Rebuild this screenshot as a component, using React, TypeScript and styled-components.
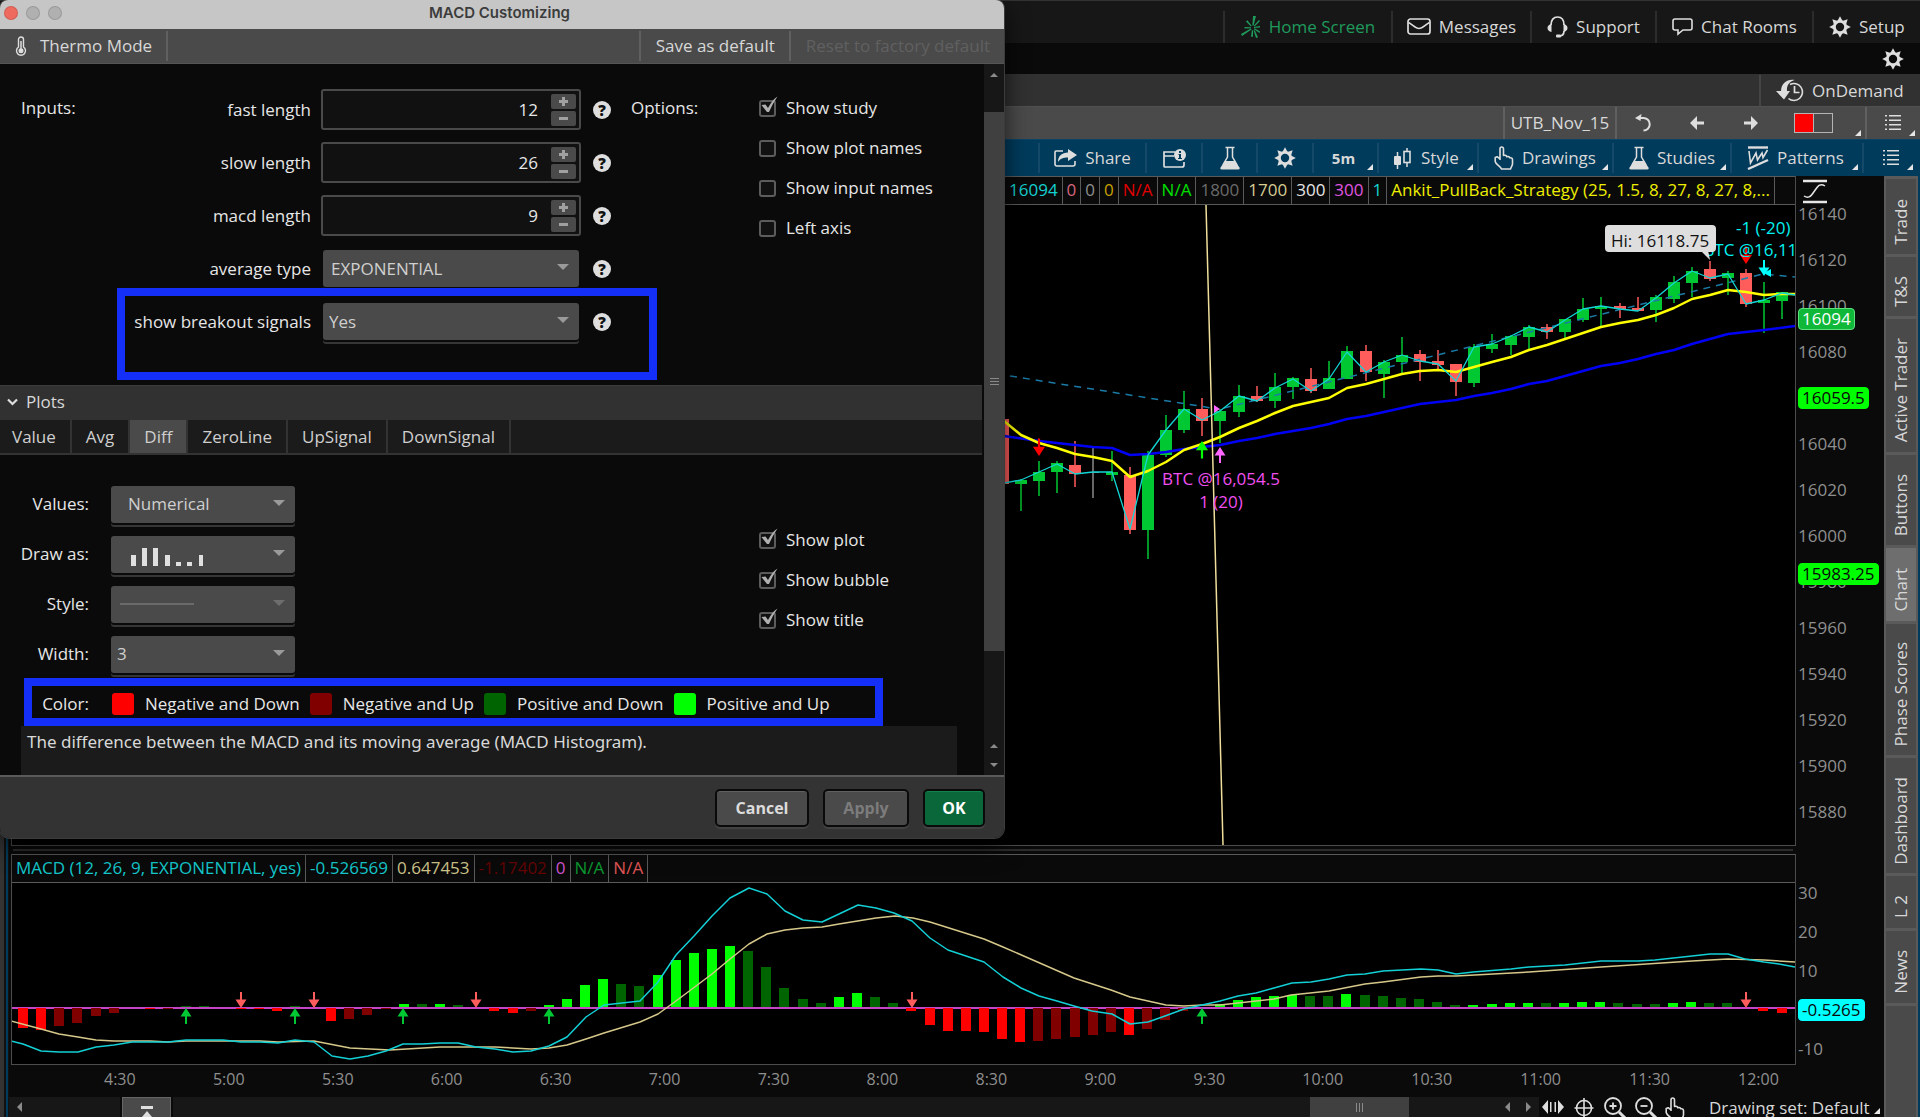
import React, { useState } from "react";
import styled, { createGlobalStyle, css } from "styled-components";

const sans = `"Open Sans", "Noto Sans", sans-serif`;

const c = {
  ink: "#0a0a0a",
  track: "#171717",
  panel: "#1b1b1b",
  bar: "#313131",
  grey: "#4a4a4a",
  line: "#5a5a5a",
  text: "#d8d8d8",
  navy: "#003b5c",
  mark: "#1430f8",
};

const Global = createGlobalStyle`
  *, *::before, *::after { box-sizing: border-box; }
  body { margin: 0; background: #000; }
  button, input, select { font: inherit; color: inherit; margin: 0; }
`;

/* ---------- application frame ---------- */

const App_ = styled.div`
  position: relative;
  display: flex;
  flex-direction: column;
  height: 100vh;
  min-height: 900px;
  overflow: hidden;
  background: ${c.ink};
  color: ${c.text};
  font: 17px/24px ${sans};
`;

const Bar = styled.div<{ $h: number; $bg: string; $line?: string }>`
  display: flex;
  flex: none;
  justify-content: flex-end;
  height: ${(p) => p.$h}px;
  padding-right: 1px;
  background: ${(p) => p.$bg};
  border-top: 1px solid ${(p) => p.$line ?? p.$bg};
`;

const MenuBar = styled(Bar)`
  padding-top: 10px;
`;

const ChartBar = styled(Bar)`
  padding: 3px 3px 3px 0;
`;

const Cell = styled.button<{ $w: number; $line: string; $green?: boolean; $start?: boolean }>`
  position: relative;
  display: flex;
  align-items: center;
  justify-content: ${(p) => (p.$start ? "flex-start" : "center")};
  gap: 8px;
  width: ${(p) => p.$w}px;
  padding: 0 ${(p) => (p.$start ? 15 : 0)}px;
  border: 0;
  border-left: 2px solid ${(p) => p.$line};
  background: none;
  color: ${(p) => (p.$green ? "#1f9a5c" : c.text)};
  white-space: nowrap;
  svg { flex: none; }
`;

const Bold = styled.b`
  padding-right: 4px;
  font-size: 15px;
  font-weight: 700;
`;

const Corner = styled.i`
  position: absolute;
  right: 4px;
  bottom: 3px;
  border: 3px solid transparent;
  border-right-color: #e6e6e6;
  border-bottom-color: #e6e6e6;
`;

const Swatches = styled.span`
  display: flex;
  width: 39px;
  height: 20px;
  border: 1px solid #b4b4b4;
  &::before {
    content: "";
    width: 19px;
    background: #f00;
    border-right: 1px solid #b4b4b4;
  }
`;

const Body = styled.div`
  display: flex;
  flex: 1;
  min-height: 0;
`;

const LeftEdge = styled.div`
  flex: none;
  width: 9px;
  background: linear-gradient(90deg, #333 0 4px, #111 4px 6px, ${c.navy} 6px 8px, #111 8px);
`;

const Workspace = styled.main`
  display: flex;
  flex: 1;
  flex-direction: column;
  min-width: 0;
`;

const Pane = styled.section<{ $grow?: boolean }>`
  display: flex;
  flex: ${(p) => (p.$grow ? "1" : "none")};
  min-height: 0;
  padding-left: 2px;
`;

const Frame = styled.div`
  display: flex;
  flex: 1;
  flex-direction: column;
  min-width: 0;
  border: solid #4c4c4c;
  border-width: 0 1px 1px 1px;
  background: #000;
`;

const LabelRow = styled.div<{ $end?: boolean }>`
  display: flex;
  flex: none;
  justify-content: ${(p) => (p.$end ? "flex-end" : "flex-start")};
  height: 29px;
  border: solid ${c.line};
  border-width: 1px 0;
  background: ${c.ink};
  line-height: 26px;
  overflow: hidden;
`;

const Label = styled.span<{ $color: string }>`
  flex: none;
  padding: 0 4px;
  border-right: 1px solid ${c.line};
  color: ${(p) => p.$color};
  white-space: nowrap;
`;

const LabelEnd = styled.span`
  flex: none;
  width: 20px;
`;

const Plot = styled.svg<{ $h?: number }>`
  display: block;
  flex: ${(p) => (p.$h ? "none" : "1")};
  width: 100%;
  height: ${(p) => (p.$h ? `${p.$h}px` : "auto")};
  min-height: 0;
  font: 17px ${sans};
`;

const Axis = styled.div<{ $pad: number }>`
  position: relative;
  flex: none;
  width: 88px;
  padding: ${(p) => p.$pad}px 0 0 2px;
  color: #8f8f8f;
  contain: size;
`;

const Tick = styled.div<{ $h: number }>`
  height: ${(p) => p.$h}px;
  line-height: ${(p) => p.$h}px;
`;

const AxisIcon = styled.svg`
  position: absolute;
  top: 2px;
  left: 6px;
`;

const Tag = styled.span<{ $bg: string; $fg: string; $edge: string }>`
  position: absolute;
  left: 2px;
  height: 22px;
  padding: 0 3px;
  border: 1px solid ${(p) => p.$edge};
  border-radius: 4px;
  background: ${(p) => p.$bg};
  color: ${(p) => p.$fg};
  line-height: 20px;
`;

const Divider = styled.div`
  flex: none;
  height: 8px;
  padding: 3px 91px 0 4px;
  &::before {
    content: "";
    display: block;
    height: 2px;
    background: #2c2c2c;
  }
`;

const Times = styled.div`
  display: grid;
  flex: none;
  grid-template-columns: repeat(16, 1fr);
  height: 32px;
  padding: 0 37px 0 95px;
  color: #8f8f8f;
  font-size: 16px;
  line-height: 28px;
`;

const Bottom = styled.div`
  display: flex;
  flex: none;
  align-items: stretch;
  height: 20px;
  overflow: hidden;
`;

const Arrow = styled.button<{ $dir: "l" | "r" }>`
  width: 21px;
  padding: 0;
  border: 0;
  background: none;
  &::before {
    content: "";
    display: block;
    width: 0;
    margin: auto;
    border: 5px solid transparent;
    ${(p) =>
      p.$dir === "l"
        ? css`border-right-color: #8a8a8a; border-left-width: 0;`
        : css`border-left-color: #8a8a8a; border-right-width: 0;`}
  }
`;

const HScroll = styled.div`
  display: flex;
  flex: 1;
  justify-content: flex-end;
  background: ${c.track};
`;

const Lead = styled.div`
  display: flex;
  width: 111px;
  background: ${c.track};
`;

const UpButton = styled.button`
  width: 49px;
  margin: 0 2px;
  padding: 0;
  border: 1px solid #666;
  border-bottom: 0;
  background: ${c.grey};
  svg { display: block; margin: auto; }
`;

const HThumb = styled.div`
  display: flex;
  align-items: center;
  justify-content: center;
  width: 99px;
  margin-right: 88px;
  background: #404040;
`;

const Tools = styled.div`
  display: flex;
  gap: 7px;
  padding: 0 8px 0 2px;
`;

const Tool = styled.button`
  display: flex;
  width: 24px;
  padding: 0;
  border: 0;
  background: none;
`;

const DrawingSet = styled.button`
  position: relative;
  width: 187px;
  padding: 0 0 0 12px;
  border: 0;
  background: none;
  line-height: 19px;
  text-align: left;
  white-space: nowrap;
`;

const Side = styled.nav`
  display: flex;
  flex: none;
  flex-direction: column;
  width: 34px;
  background: ${c.grey};
  border: solid ${c.line};
  border-width: 0 2px;
`;

const SideTab = styled.button<{ $h: number; $on?: boolean }>`
  flex: none;
  height: ${(p) => p.$h}px;
  padding: 10px 2px 0;
  border: 0;
  border-top: 3px solid ${c.line};
  background: ${(p) => (p.$on ? "#6e6e6e" : "none")};
  line-height: 26px;
  writing-mode: vertical-rl;
  white-space: nowrap;
  span { display: inline-block; transform: rotate(180deg); }
`;

const SideEnd = styled.div`
  flex: 1;
  border-top: 3px solid ${c.line};
`;

const RightEdge = styled.div`
  flex: none;
  width: 2px;
  background: ${c.navy};
`;

/* ---------- dialog ---------- */

const Dialog = styled.section`
  position: absolute;
  top: 0;
  left: 0;
  display: flex;
  flex-direction: column;
  width: 1004px;
  border-radius: 8px 8px 10px 10px;
  background: ${c.ink};
  box-shadow: 0 0 0 1px #3c3c3c, 0 8px 24px rgba(0, 0, 0, 0.7);
  overflow: hidden;
  color: #e6e6e6;
`;

const TitleBar = styled.header`
  display: grid;
  grid-template-columns: 60px 1fr 65px;
  align-items: start;
  height: 29px;
  padding: 0 4px;
  background: #c6c6c6;
  h1 {
    margin: 0;
    color: #3c3c3c;
    font: 600 15px/26px "Inter", ${sans};
    text-align: center;
  }
`;

const Lights = styled.div`
  display: flex;
  gap: 8px;
  padding-top: 6px;
`;

const Light = styled.button<{ $bg: string }>`
  width: 14px;
  height: 14px;
  padding: 0;
  border: 1px solid rgba(0, 0, 0, 0.12);
  border-radius: 50%;
  background: ${(p) => p.$bg};
`;

const DialogBar = styled.div`
  display: flex;
  height: 35px;
  border-bottom: 1px solid #555;
  background: ${c.grey};
`;

const BarButton = styled.button<{ $side: "l" | "r" }>`
  display: flex;
  align-items: center;
  gap: 13px;
  margin: 2px 0;
  padding: 0 14px 0 15px;
  border: 0;
  border-${(p) => (p.$side === "l" ? "right" : "left")}: 2px solid #606060;
  background: none;
  color: ${c.text};
  &:disabled { color: #606060; }
`;

const Gap = styled.div`
  flex: 1;
`;

const DialogBody = styled.div`
  display: flex;
`;

const Content = styled.div`
  flex: 1;
  min-width: 0;
`;

const Inputs = styled.div`
  position: relative;
  display: flex;
  height: 321px;
  padding: 19px 0 0 21px;
`;

const Heading = styled.div<{ $w: number }>`
  width: ${(p) => p.$w}px;
  padding-top: 13px;
`;

const Field = styled.div`
  display: grid;
  grid-template-columns: 190px 260px 20px;
  column-gap: 10px;
  align-items: center;
  justify-items: end;
  height: 53px;
  margin-right: 20px;
`;

const NumberBox = styled.div`
  display: flex;
  align-items: center;
  width: 260px;
  height: 41px;
  padding-right: 3px;
  border: 2px solid ${c.grey};
  border-radius: 3px;
  background: #111;
  input {
    flex: 1;
    min-width: 0;
    padding: 0 13px;
    border: 0;
    background: none;
    text-align: right;
    outline: 0;
  }
`;

const Spinner = styled.div`
  display: grid;
  gap: 2px;
  button {
    display: flex;
    align-items: center;
    justify-content: center;
    width: 25px;
    height: 15px;
    padding: 0;
    border: 0;
    border-radius: 2px;
    background: ${c.grey};
  }
`;

const Pick = styled.div<{ $w: number; $off?: boolean; $pad: number }>`
  position: relative;
  justify-self: center;
  width: ${(p) => p.$w}px;
  height: 37px;
  select {
    width: 100%;
    height: 37px;
    padding: 0 30px 0 ${(p) => p.$pad}px;
    border: 0;
    border-radius: 3px;
    background: ${c.grey};
    box-shadow: 0 2px 0 ${c.ink}, 0 4px 0 #363636;
    color: #cfcfcf;
    opacity: 1;
    appearance: none;
    outline: 0;
  }
  &::after {
    content: "";
    position: absolute;
    top: 14px;
    right: 10px;
    border: 6px solid transparent;
    border-top-color: ${(p) => (p.$off ? "#6e6e6e" : "#9a9a9a")};
    border-bottom-width: 0;
    pointer-events: none;
  }
  svg {
    position: absolute;
    top: 0;
    left: 0;
    pointer-events: none;
  }
`;

const Help = styled.button`
  width: 18px;
  height: 18px;
  padding: 0;
  border: 0;
  border-radius: 50%;
  background: #dedede;
  color: #111;
  font-size: 15px;
  font-weight: 800;
  line-height: 18px;
`;

const Checks = styled.div`
  padding-top: 5px;
`;

const CheckLabel = styled.label`
  display: flex;
  align-items: center;
  gap: 10px;
  height: 40px;
`;

const Check = styled.span`
  position: relative;
  display: flex;
  input {
    width: 17px;
    height: 17px;
    margin: 0;
    border: 2px solid #5c5c5c;
    border-radius: 3px;
    background: #111;
    appearance: none;
  }
  svg {
    position: absolute;
    top: -4px;
    left: 0;
    pointer-events: none;
  }
`;

const Highlight = styled.div<{ $top: number; $left: number; $w: number; $h: number }>`
  position: absolute;
  top: ${(p) => p.$top}px;
  left: ${(p) => p.$left}px;
  width: ${(p) => p.$w}px;
  height: ${(p) => p.$h}px;
  border: 8px solid ${c.mark};
  pointer-events: none;
`;

const PlotsHeader = styled.button`
  display: flex;
  align-items: center;
  gap: 8px;
  width: calc(100% - 2px);
  height: 35px;
  padding: 0 0 2px 7px;
  border: 0;
  border-top: 1px solid #3c3c3c;
  background: ${c.bar};
  color: ${c.text};
`;

const Tabs = styled.div`
  display: flex;
  width: calc(100% - 2px);
  height: 35px;
  border-bottom: 2px solid #333;
  background: ${c.panel};
`;

const Tab = styled.button<{ $on: boolean }>`
  padding: 0 14px;
  border: 0;
  border-right: 2px solid #333;
  background: ${(p) => (p.$on ? c.grey : "none")};
  color: #cfcfcf;
  &:first-child { padding-left: 12px; }
`;

const PlotArea = styled.div`
  display: flex;
  padding-top: 24px;
`;

const PlotFields = styled.div`
  width: 759px;
`;

const PlotField = styled.div`
  display: grid;
  grid-template-columns: 89px 184px;
  column-gap: 22px;
  align-items: center;
  height: 50px;
  label { text-align: right; }
`;

const PlotChecks = styled.div`
  padding-top: 41px;
`;

const Colors = styled.div`
  position: relative;
  display: flex;
  align-items: center;
  height: 47px;
  padding-top: 2px;
`;

const ColorsTitle = styled.span`
  width: 89px;
  margin-right: 23px;
  text-align: right;
`;

const ColorButton = styled.button<{ $bg: string }>`
  display: flex;
  align-items: center;
  gap: 11px;
  padding: 0;
  margin-right: 10px;
  border: 0;
  background: none;
  &::before {
    content: "";
    width: 22px;
    height: 22px;
    border-radius: 3px;
    background: ${(p) => p.$bg};
  }
`;

const Description = styled.p`
  height: 49px;
  margin: 0 27px 0 21px;
  padding: 4px 6px;
  background: ${c.panel};
  color: ${c.text};
  font-family: "Noto Sans", ${sans};
`;

const VScroll = styled.div`
  display: flex;
  flex-direction: column;
  align-items: center;
  width: 20px;
  background: ${c.track};
`;

const VThumb = styled.div`
  display: flex;
  align-items: center;
  justify-content: center;
  width: 20px;
  height: 539px;
  margin: 36px 0 auto;
  background: #404040;
`;

const VArrow = styled.button<{ $down?: boolean }>`
  display: flex;
  align-items: center;
  justify-content: center;
  width: 20px;
  height: 12px;
  padding: 0;
  border: 0;
  background: none;
  &::before {
    content: "";
    border: 4px solid transparent;
    ${(p) =>
      p.$down
        ? css`border-top-color: #8a8a8a; border-bottom-width: 0;`
        : css`border-bottom-color: #8a8a8a; border-top-width: 0;`}
  }
`;

const VEnds = styled.div`
  display: grid;
  gap: 7px;
  padding-bottom: 4px;
`;

const VStart = styled.div`
  height: 12px;
  padding-top: 5px;
`;

const Footer = styled.footer`
  display: flex;
  justify-content: flex-end;
  gap: 14px;
  height: 63px;
  padding: 12px 19px 0 0;
  border-top: 2px solid ${c.line};
  background: #333;
`;

const Action = styled.button<{ $w: number; $go?: boolean }>`
  width: ${(p) => p.$w}px;
  height: 38px;
  padding: 0;
  border: 2px solid ${c.ink};
  border-radius: 5px;
  background: ${(p) => (p.$go ? "#0a673a" : c.grey)};
  box-shadow: inset 0 1px 0 ${(p) => (p.$go ? "#12834c" : "#606060")}, 0 2px 0 #424242;
  color: ${(p) => (p.$go ? "#fff" : "#dcdcdc")};
  font-size: 16px;
  font-weight: 700;
  &:disabled { color: #7c7c7c; }
`;

/* ---------- icons ---------- */

const W = "#dedede";

const Gear = () => (
  <svg width="22" height="22" viewBox="-11 -11 22 22" aria-hidden="true">
    <circle r="5.6" fill="none" stroke={W} strokeWidth="2.8" />
    {[0, 45, 90, 135, 180, 225, 270, 315].map((a) => (
      <path key={a} d="M-2.6 -6 L0 -10.8 L2.6 -6Z" fill={W} transform={`rotate(${a})`} />
    ))}
  </svg>
);

const Burst = () => (
  <svg width="20" height="22" viewBox="0 0 20 22" aria-hidden="true" fill="#1f9a5c">
    <path d="M12 0h3l-2.400 9.500-1.200-.1zM19 5l-5.500 5.600-.8-.8L18 4zM19 11.500l-6 .6v-1.200l6-.8zM18.500 17l-5.600-3.800.7-.9 5.400 3.200zM15 22l-2.400-7.500 1.100-.3 3.300 7zM10 20.500l.9-6.300 1.200.1-.2 6.700zM1 20l-1-2 9.800-5.600.7 1zM3.500 12.500v-1.600l6.500.4v1zM5 5.500l1.400-1.200 4.300 5.500-.8.6z" />
  </svg>
);

const Mail = () => (
  <svg width="24" height="18" viewBox="0 0 24 18" aria-hidden="true" fill="none" stroke={W} strokeWidth="1.7">
    <rect x="1" y="1" width="22" height="15" rx="2.500" />
    <path d="M1.500 4.500c4 2 7 6 10.500 6s6.500-4 10.500-6" />
  </svg>
);

const Headset = () => (
  <svg width="21" height="22" viewBox="0 0 21 22" aria-hidden="true" fill="none" stroke={W} strokeWidth="1.700">
    <path d="M4 9c0-5 2.500-8 6.500-8S17 4 17 9M17 15c0 3-2 5-5 5" />
    <path d="M4.500 8v8C2 15.500.5 14 .5 12s1.500-3.500 4-4zM16.500 8v8c2.500-.5 4-2 4-4s-1.500-3.500-4-4z" fill={W} stroke="none" />
    <rect x="9" y="18.500" width="5" height="3" rx="1" fill={W} stroke="none" />
  </svg>
);

const Chat = () => (
  <svg width="21" height="18" viewBox="0 0 21 18" aria-hidden="true" fill="none" stroke={W} strokeWidth="1.600">
    <path d="M3 1h15q2 0 2 2v7q0 2-2 2h-7l-5 4v-4H3q-2 0-2-2V3q0-2 2-2z" />
  </svg>
);

const Demand = () => (
  <svg width="28" height="24" viewBox="0 0 28 24" aria-hidden="true">
    <path d="M14 5.500a8.500 8.500 0 1 1-1.500 14" fill="none" stroke={W} strokeWidth="1.600" />
    <path d="M18.500 7v6.500h5" fill="none" stroke={W} strokeWidth="1.700" />
    <path d="M18.500 1C11 0 5.500 4 5 12H0l8 8.500 6-8.500h-3C10.500 6.500 13 3 18.500 1z" fill={W} />
  </svg>
);

const Undo = () => (
  <svg width="16" height="18" viewBox="0 0 16 18" aria-hidden="true">
    <path d="M3 4h5.500a6 6 0 0 1 0 12.500" fill="none" stroke={W} strokeWidth="2" />
    <path d="M0 4l6.500-4-1 7z" fill={W} />
  </svg>
);

const Left = () => (
  <svg width="14" height="14" viewBox="0 0 14 14" aria-hidden="true">
    <path d="M0 7l7-7v5.500h7v3H7V14z" fill={W} />
  </svg>
);

const Right = () => (
  <svg width="14" height="14" viewBox="0 0 14 14" aria-hidden="true">
    <path d="M14 7L7 0v5.500H0v3h7V14z" fill={W} />
  </svg>
);

const List = () => (
  <svg width="16" height="16" viewBox="0 0 16 16" aria-hidden="true" fill={W}>
    {[0, 4.5, 9, 13.5].map((y) => (
      <path key={y} d={`M0 ${y}h2v1.500H0zM4 ${y}h12v1.500H4z`} />
    ))}
  </svg>
);

const Share = () => (
  <svg width="23" height="18" viewBox="0 0 23 18" aria-hidden="true">
    <path d="M9 2H2q-1 0-1 1v12q0 2 2 2h16q2 0 2-2v-3" fill="none" stroke={W} strokeWidth="1.600" />
    <path d="M14 0l9 6-9 6V8.500c-5 0-7.500 1-10 4.500 0-6 4-9.500 10-9.500z" fill={W} />
  </svg>
);

const Card = () => (
  <svg width="23" height="19" viewBox="0 0 23 19" aria-hidden="true">
    <path d="M12 3H1v14q0 1 1 1h17q2 0 2-2v-3M1 7h10" fill="none" stroke={W} strokeWidth="1.700" />
    <circle cx="17" cy="6" r="6" fill={W} />
    <path d="M16 2h2v2h-2zM15.500 5H18v4h1v1h-4V9h1V6h-.5z" fill={c.navy} />
  </svg>
);

const Flask = () => (
  <svg width="20" height="24" viewBox="0 0 20 24" aria-hidden="true">
    <path d="M5.500 1.500h9M7.500 2v9l-4 7h13l-4-7V2" fill="none" stroke={W} strokeWidth="1.500" />
    <path d="M5 15h10l4.500 6.500q.8 2-1.500 2H2q-2.300 0-1.500-2z" fill={W} />
  </svg>
);

const Candles = () => (
  <svg width="19" height="21" viewBox="0 0 19 21" aria-hidden="true">
    <path d="M3.500 4v17M13 0v4M13 15v4" stroke={W} strokeWidth="1.500" />
    <rect x="0" y="8" width="7" height="9" rx="1" fill={W} />
    <rect x="10" y="3.500" width="6" height="11" fill="none" stroke={W} strokeWidth="1.600" />
  </svg>
);

const Hand = () => (
  <svg width="20" height="24" viewBox="0 0 20 24" aria-hidden="true" fill="none" stroke={W} strokeWidth="1.600" strokeLinejoin="round">
    <path d="M6 14V3q0-2 1.700-2T9.500 3v6.500q3-.8 3.300 1.300 2.500-.8 3 1 2.700-.3 2.700 2v4c0 2-1.500 3-2 5.200h-9C6.500 20 2 19 1.200 15.500V11.500l2-.8 2.800 2.300" />
  </svg>
);

const Pattern = () => (
  <svg width="22" height="24" viewBox="0 0 22 24" aria-hidden="true" fill="none" stroke={W}>
    <path d="M1 1.500h20" strokeWidth="2.400" />
    <path d="M1 23L21 14" strokeWidth="2.400" />
    <path d="M2 5l1.500 12L9 7l1.500 7L15 7l1 4.500L20.500 4" strokeWidth="1.600" />
  </svg>
);

const Thermo = () => (
  <svg width="12" height="20" viewBox="0 0 12 20" aria-hidden="true">
    <path d="M3.500 11V3.500a2.500 2.500 0 0 1 5 0V11a4.500 4.500 0 1 1-5 0z" fill="none" stroke={W} strokeWidth="1.400" />
    <path d="M6 5v9" stroke={W} strokeWidth="1.500" />
    <circle cx="6" cy="14.800" r="2.500" fill={W} />
  </svg>
);

const Plus = () => (
  <svg width="9" height="9" viewBox="0 0 9 9" aria-hidden="true">
    <path d="M3 0h3v3h3v3H6v3H3V6H0V3h3z" fill="#a0a0a0" />
  </svg>
);

const Minus = () => (
  <svg width="9" height="3" viewBox="0 0 9 3" aria-hidden="true">
    <path d="M0 0h9v3H0z" fill="#a0a0a0" />
  </svg>
);

const Tick_ = () => (
  <svg width="19" height="19" viewBox="0 0 19 19" aria-hidden="true">
    <path d="M2.500 9l4-.5 2.500 3.500Q13 4 18.500.5 14 7 10 16H8z" fill="#b0b0b0" />
  </svg>
);

const Chevron = () => (
  <svg width="11" height="8" viewBox="0 0 11 8" aria-hidden="true">
    <path d="M1 1.500l4.500 4.500L10 1.500" fill="none" stroke={W} strokeWidth="2.200" />
  </svg>
);

const Grip = ({ vertical }: { vertical?: boolean }) => (
  <svg width="9" height="9" viewBox="0 0 9 9" aria-hidden="true" stroke="#8a8a8a" strokeWidth="1">
    <path d={vertical ? "M1.500 0v9M4.500 0v9M7.500 0v9" : "M0 1.500h9M0 4.500h9M0 7.500h9"} />
  </svg>
);

/* ---------- chart data ---------- */

type Candle = [x: number, high: number, top: number, bottom: number, low: number, kind: "g" | "r" | "n"];

const candles: Candle[] = [
  [1003, 419, 419, 484, 484, "r"],
  [1021, 479, 480, 484, 511, "g"],
  [1039, 461, 472, 481, 496, "g"],
  [1057, 461, 463, 472, 493, "g"],
  [1075, 441, 465, 474, 487, "r"],
  [1093, 448, 472, 473, 498, "n"],
  [1112, 451, 472, 475, 481, "g"],
  [1130, 467, 475, 530, 534, "r"],
  [1148, 451, 455, 530, 559, "g"],
  [1166, 415, 430, 455, 457, "g"],
  [1184, 391, 409, 430, 433, "g"],
  [1202, 398, 409, 421, 436, "r"],
  [1220, 409, 411, 421, 443, "g"],
  [1239, 385, 396, 412, 417, "g"],
  [1257, 386, 396, 401, 402, "r"],
  [1275, 373, 387, 401, 408, "g"],
  [1293, 377, 378, 387, 399, "g"],
  [1311, 368, 379, 391, 393, "r"],
  [1329, 361, 378, 389, 389, "g"],
  [1347, 346, 351, 379, 379, "g"],
  [1366, 345, 351, 372, 381, "r"],
  [1384, 360, 362, 374, 398, "g"],
  [1402, 337, 355, 362, 373, "g"],
  [1420, 350, 354, 362, 381, "r"],
  [1438, 350, 361, 365, 370, "r"],
  [1456, 364, 364, 382, 396, "r"],
  [1474, 344, 347, 383, 387, "g"],
  [1492, 334, 344, 349, 353, "g"],
  [1511, 335, 336, 345, 355, "g"],
  [1529, 325, 327, 337, 349, "g"],
  [1547, 324, 327, 332, 339, "r"],
  [1565, 319, 319, 332, 338, "g"],
  [1583, 298, 309, 320, 322, "g"],
  [1601, 297, 306, 309, 326, "g"],
  [1620, 303, 306, 309, 318, "r"],
  [1638, 297, 308, 311, 311, "r"],
  [1656, 295, 297, 310, 322, "g"],
  [1674, 276, 282, 299, 303, "g"],
  [1692, 267, 271, 283, 297, "g"],
  [1710, 261, 269, 279, 281, "r"],
  [1728, 271, 273, 278, 295, "g"],
  [1746, 269, 273, 304, 307, "r"],
  [1764, 282, 300, 303, 333, "g"],
  [1782, 292, 292, 301, 319, "g"],
];

const tone = { g: "#00c832", r: "#ff5c5c", n: "#8a8a8a" };

const closeLine =
  "1004,483 1021,480 1039,472 1057,464 1075,474 1093,472 1112,472 1130,529 1148,455 1166,430 1184,409 1202,420 1220,411 1239,396 1257,401 1275,388 1293,379 1311,391 1329,379 1347,352 1366,372 1384,362 1402,355 1420,361 1438,364 1456,381 1474,347 1492,344 1511,336 1529,327 1547,332 1565,320 1583,309 1601,306 1620,309 1638,311 1656,298 1674,283 1692,271 1710,278 1728,274 1746,304 1764,300 1782,293 1795,295";

const fastLine =
  "1004,421 1021,435 1039,443 1057,448 1075,454 1093,457 1112,461 1130,477 1148,471 1166,462 1184,450 1202,444 1220,437 1239,428 1257,421 1275,413 1293,406 1311,402 1329,398 1347,388 1366,384 1384,379 1402,374 1420,371 1438,370 1456,372 1474,367 1492,362 1511,357 1529,350 1547,345 1565,339 1583,333 1601,327 1620,323 1638,320 1656,315 1674,308 1692,299 1710,295 1728,290 1746,292 1764,295 1782,294 1795,294";

const slowLine =
  "1004,436 1039,441 1057,443 1093,447 1112,448 1130,455 1148,454 1166,452 1184,449 1202,447 1220,445 1239,441 1257,438 1275,434 1293,431 1311,428 1329,424 1347,419 1366,416 1384,412 1402,408 1420,404 1438,402 1456,400 1474,396 1492,393 1511,389 1529,384 1547,381 1565,376 1583,371 1601,366 1620,363 1638,359 1656,354 1674,350 1692,344 1710,339 1728,334 1764,330 1795,326";

// Histogram columns: signed height and shade (R/r falling or easing negative, G/g rising or easing positive).
const histogram =
  "-20R -22R -18r -15r -8r -5r 0r -1R -1r 1g 1g 0g -1R -1R -3R 1g 0g -13R -11r -7r -1r 3G 3g 3G 2g 0g -3R -5R -3r 2G 8G 22G 28G 23g 21g 32G 47G 54G 58G 61G 56g 40g 19g 8g 4g 10G 14G 10g 4g -3R -17R -23R -23R -24R -31R -34R -33r -31r -29r -27r -24r -27R -21r -12r -3r 0r 3G 7G 10G 11G 12G 11g 11g 13G 12g 11g 9g 8g 5g 2g 2G 3G 4G 4G 4g 4G 5G 5G 4g 3g 3g 4G 5G 4g 4g 0g -3R -5R"
    .split(" ")
    .map((s) => ({ h: parseInt(s, 10), shade: s.slice(-1) }));

const shades: Record<string, string> = { R: "#ff0000", r: "#800000", G: "#00ff00", g: "#006400" };

const macdLine =
  "11,1041 23,1044 41,1051 59,1052 78,1052 96,1047 114,1045 132,1042 168,1042 186,1040 223,1040 241,1042 260,1042 278,1043 295,1040 314,1042 332,1056 350,1059 368,1056 386,1051 403,1044 422,1044 440,1043 458,1043 476,1047 495,1049 513,1052 531,1051 549,1046 567,1037 586,1017 604,1005 640,1001 658,982 676,955 694,936 712,916 730,898 749,888 767,894 785,911 803,920 822,922 839,914 858,905 876,908 894,913 912,921 930,938 948,950 966,956 984,962 1003,977 1021,988 1039,996 1057,1001 1074,1006 1092,1011 1112,1014 1130,1024 1148,1022 1165,1016 1184,1009 1202,1005 1220,1001 1238,996 1256,993 1274,988 1292,983 1311,982 1329,979 1347,975 1365,974 1383,971 1402,970 1421,969 1438,970 1456,974 1473,972 1511,969 1529,967 1565,965 1583,963 1601,961 1638,961 1655,960 1692,956 1710,954 1728,954 1745,959 1764,962 1779,964 1795,967";

const signalLine =
  "11,1021 41,1029 59,1034 78,1037 96,1040 114,1041 150,1041 168,1042 186,1041 260,1041 278,1042 314,1041 350,1048 390,1050 440,1047 495,1047 531,1049 549,1048 567,1045 586,1039 604,1033 640,1022 658,1014 676,1001 712,974 730,959 749,944 767,934 785,930 803,928 822,927 839,924 876,918 895,916 913,918 930,922 984,939 1003,947 1074,978 1111,990 1130,997 1148,1001 1166,1005 1184,1006 1202,1005 1220,1005 1238,1003 1274,999 1291,995 1329,991 1365,984 1383,982 1421,977 1438,976 1456,976 1529,972 1601,967 1692,961 1728,959 1764,960 1795,962";

const UpArrow = ({ x, y, fill, s = 1 }: { x: number; y: number; fill: string; s?: number }) => (
  <path d="M0 0L5.500 8.500H1V16H-1V8.500H-5.500Z" fill={fill} transform={`translate(${x} ${y}) scale(${s})`} />
);

const DownArrow = ({ x, y, fill, s = 1 }: { x: number; y: number; fill: string; s?: number }) => (
  <path d="M0 0L5.500 -8.500H1V-16H-1V-8.500H-5.500Z" fill={fill} transform={`translate(${x} ${y}) scale(${s})`} />
);

const PricePlot = () => (
  <Plot viewBox="12 205 1783 640" preserveAspectRatio="xMaxYMin slice" role="img" aria-label="Price chart">
    {candles.map(([x, high, top, bottom, low, kind]) => (
      <g key={x} fill={tone[kind]}>
        <rect x={x - 1} y={high} width="2" height={low - high} opacity="0.75" />
        <rect x={x - 6} y={top} width="12" height={bottom - top} />
      </g>
    ))}
    <g fill="none" strokeLinejoin="round">
      <path d="M1010 376L1218 409M1224 408L1763 274L1795 277" stroke="#1a7ba6" strokeWidth="1.500" strokeDasharray="7 6" />
      <polyline points={slowLine} stroke="#0000f5" strokeWidth="2.500" />
      <polyline points={fastLine} stroke="#ffff00" strokeWidth="2.500" />
      <polyline points={closeLine} stroke="#12d6d6" strokeWidth="1.300" />
      <path d="M1206 205L1216 580L1223 845" stroke="#f0de9c" strokeWidth="1.500" />
    </g>
    <DownArrow x={1039} y={456} fill="#ff0000" s={1.100} />
    <UpArrow x={1202} y={441} fill="#00ff00" s={1.100} />
    <UpArrow x={1220} y={447} fill="#ff66ff" />
    <path d="M1214 405l6 4-6 4z" fill="#ff66ff" />
    <DownArrow x={1746} y={264} fill="#ff0000" s={1.100} />
    <DownArrow x={1764} y={276} fill="#00ffff" />
    <path d="M1771 269v8l-7-4z" fill="#00ffff" />
    <g fill="#f04ef0" textAnchor="middle">
      <text x="1221" y="485">BTC @16,054.5</text>
      <text x="1221" y="508">1 (20)</text>
    </g>
    <g fill="#00f0f0">
      <text x="1736" y="234">-1 (-20)</text>
      <text x="1705" y="256">STC @16,11</text>
    </g>
    <path d="M1700 250L1710 260L1708 250Z" fill="#dedede" />
    <rect x="1605" y="225" width="111" height="27" rx="4" fill="#dedede" />
    <text x="1611" y="247" fill="#111">Hi: 16118.75</text>
  </Plot>
);

const MacdPlot = () => (
  <Plot $h={181} viewBox="12 883 1783 181" preserveAspectRatio="xMaxYMin slice" role="img" aria-label="MACD chart">
    <path d="M11 1008H1795" stroke="#c545c5" strokeWidth="2" />
    {histogram.map(({ h, shade }, i) => (
      <rect
        key={i}
        x={18 + Math.round(i * 18.13)}
        y={h > 0 ? 1007 - h : 1008}
        width="10"
        height={Math.abs(h)}
        fill={shades[shade]}
      />
    ))}
    <g fill="none" strokeWidth="1.500" strokeLinejoin="round">
      <polyline points={signalLine} stroke="#d6c88a" />
      <polyline points={macdLine} stroke="#12d0d6" />
    </g>
    {[241, 314, 476, 912, 1746].map((x) => (
      <DownArrow key={x} x={x} y={1008} fill="#ff5c5c" />
    ))}
    {[186, 295, 403, 549, 1202].map((x) => (
      <UpArrow key={x} x={x} y={1008} fill="#00c832" />
    ))}
  </Plot>
);

/* ---------- composed parts ---------- */

const priceTicks = [16140, 16120, 16100, 16080, 0, 16040, 16020, 16000, 15980, 15960, 15940, 15920, 15900, 15880];

const priceTags = [
  { value: 16094, bg: "#10b83a", fg: "#ffffff", edge: "#5ee07e" },
  { value: 16059.5, bg: "#00ff00", fg: "#0a0a0a", edge: "#00ff00" },
  { value: 15983.25, bg: "#00ff00", fg: "#0a0a0a", edge: "#00ff00" },
];

const times = "4:30 5:00 5:30 6:00 6:30 7:00 7:30 8:00 8:30 9:00 9:30 10:00 10:30 11:00 11:30 12:00".split(" ");

const strategyLabels: [string, string][] = [
  ["16094", "#14d0d0"],
  ["0", "#d6667e"],
  ["0", "#8f8f8f"],
  ["0", "#c8a000"],
  ["N/A", "#e00000"],
  ["N/A", "#00e000"],
  ["1800", "#6a6a6a"],
  ["1700", "#d6cc94"],
  ["300", "#e6e6e6"],
  ["300", "#e055e0"],
  ["1", "#14d0d0"],
  ["Ankit_PullBack_Strategy (25, 1.5, 8, 27, 8, 27, 8,...", "#eeee00"],
];

const macdLabels: [string, string][] = [
  ["MACD (12, 26, 9, EXPONENTIAL, yes)", "#14c8cc"],
  ["-0.526569", "#14c8cc"],
  ["0.647453", "#cfc48a"],
  ["-1.17402", "#640404"],
  ["0", "#d055d0"],
  ["N/A", "#0a9a30"],
  ["N/A", "#e05555"],
];

const sideTabs: [string, number][] = [
  ["Trade", 78],
  ["T&S", 62],
  ["Active Trader", 136],
  ["Buttons", 93],
  ["Chart", 76],
  ["Phase Scores", 134],
  ["Dashboard", 118],
  ["L 2", 55],
  ["News", 75],
];

function CheckItem({ label, on }: { label: string; on: boolean }) {
  const [checked, setChecked] = useState(on);
  return (
    <CheckLabel>
      <Check>
        <input type="checkbox" checked={checked} onChange={() => setChecked(!checked)} />
        {checked && <Tick_ />}
      </Check>
      {label}
    </CheckLabel>
  );
}

function NumberField({ id, label, initial }: { id: string; label: string; initial: number }) {
  const [value, setValue] = useState(initial);
  return (
    <Field>
      <label htmlFor={id}>{label}</label>
      <NumberBox>
        <input id={id} inputMode="numeric" value={value} onChange={(e) => setValue(Number(e.target.value) || 0)} />
        <Spinner>
          <button aria-label={`Increase ${label}`} onClick={() => setValue(value + 1)}>
            <Plus />
          </button>
          <button aria-label={`Decrease ${label}`} onClick={() => setValue(value - 1)}>
            <Minus />
          </button>
        </Spinner>
      </NumberBox>
      <Help>?</Help>
    </Field>
  );
}

function MacdDialog() {
  const [tab, setTab] = useState("Diff");
  return (
    <Dialog role="dialog" aria-label="MACD Customizing">
      <TitleBar>
        <Lights>
          <Light $bg="#ee6a5f" aria-label="Close" />
          <Light $bg="#b0b0b0" aria-label="Minimize" />
          <Light $bg="#b0b0b0" aria-label="Zoom" />
        </Lights>
        <h1>MACD Customizing</h1>
      </TitleBar>
      <DialogBar>
        <BarButton $side="l">
          <Thermo />
          Thermo Mode
        </BarButton>
        <Gap />
        <BarButton $side="r">Save as default</BarButton>
        <BarButton $side="r" disabled>
          Reset to factory default
        </BarButton>
      </DialogBar>
      <DialogBody>
        <Content>
          <Inputs>
            <Heading $w={100}>Inputs:</Heading>
            <div>
              <NumberField id="fast" label="fast length" initial={12} />
              <NumberField id="slow" label="slow length" initial={26} />
              <NumberField id="macd" label="macd length" initial={9} />
              <Field>
                <label htmlFor="avg">average type</label>
                <Pick $w={256} $pad={8}>
                  <select id="avg">
                    <option>EXPONENTIAL</option>
                  </select>
                </Pick>
                <Help>?</Help>
              </Field>
              <Field>
                <label htmlFor="breakout">show breakout signals</label>
                <Pick $w={256} $pad={6}>
                  <select id="breakout">
                    <option>Yes</option>
                  </select>
                </Pick>
                <Help>?</Help>
              </Field>
            </div>
            <Heading $w={128}>Options:</Heading>
            <Checks>
              <CheckItem label="Show study" on />
              <CheckItem label="Show plot names" on={false} />
              <CheckItem label="Show input names" on={false} />
              <CheckItem label="Left axis" on={false} />
            </Checks>
            <Highlight $top={224} $left={117} $w={540} $h={92} />
          </Inputs>
          <PlotsHeader>
            <Chevron />
            Plots
          </PlotsHeader>
          <Tabs role="tablist">
            {["Value", "Avg", "Diff", "ZeroLine", "UpSignal", "DownSignal"].map((t) => (
              <Tab key={t} role="tab" aria-selected={t === tab} $on={t === tab} onClick={() => setTab(t)}>
                {t}
              </Tab>
            ))}
          </Tabs>
          <PlotArea>
            <PlotFields>
              <PlotField>
                <label htmlFor="values">Values:</label>
                <Pick $w={184} $pad={17}>
                  <select id="values">
                    <option>Numerical</option>
                  </select>
                </Pick>
              </PlotField>
              <PlotField>
                <label htmlFor="draw">Draw as:</label>
                <Pick $w={184} $pad={17}>
                  <select id="draw">
                    <option></option>
                  </select>
                  <svg width="100" height="37" viewBox="0 0 100 37" aria-hidden="true">
                    <path
                      d="M20 19h5v11h-5zM31 12h5v18h-5zM42 12h5v18h-5zM54 19h5v11h-5zM65 26h5v4h-5zM76 26h5v4h-5zM88 19h4v11h-4z"
                      fill="#e0e0e0"
                    />
                  </svg>
                </Pick>
              </PlotField>
              <PlotField>
                <label htmlFor="style">Style:</label>
                <Pick $w={184} $pad={17} $off>
                  <select id="style" disabled>
                    <option></option>
                  </select>
                  <svg width="100" height="37" viewBox="0 0 100 37" aria-hidden="true">
                    <path d="M9 17h74v2H9z" fill="#6a6a6a" />
                  </svg>
                </Pick>
              </PlotField>
              <PlotField>
                <label htmlFor="width">Width:</label>
                <Pick $w={184} $pad={6}>
                  <select id="width">
                    <option>3</option>
                  </select>
                </Pick>
              </PlotField>
            </PlotFields>
            <PlotChecks>
              <CheckItem label="Show plot" on />
              <CheckItem label="Show bubble" on />
              <CheckItem label="Show title" on />
            </PlotChecks>
          </PlotArea>
          <Colors>
            <ColorsTitle>Color:</ColorsTitle>
            <ColorButton $bg="#ff0000">Negative and Down</ColorButton>
            <ColorButton $bg="#800000">Negative and Up</ColorButton>
            <ColorButton $bg="#006400">Positive and Down</ColorButton>
            <ColorButton $bg="#00ff00">Positive and Up</ColorButton>
            <Highlight $top={-1} $left={24} $w={859} $h={48} />
          </Colors>
          <Description>The difference between the MACD and its moving average (MACD Histogram).</Description>
        </Content>
        <VScroll>
          <VStart>
            <VArrow aria-label="Scroll up" />
          </VStart>
          <VThumb>
            <Grip />
          </VThumb>
          <VEnds>
            <VArrow aria-label="Page up" />
            <VArrow $down aria-label="Scroll down" />
          </VEnds>
        </VScroll>
      </DialogBody>
      <Footer>
        <Action $w={94}>Cancel</Action>
        <Action $w={86} disabled>
          Apply
        </Action>
        <Action $w={62} $go>
          OK
        </Action>
      </Footer>
    </Dialog>
  );
}

export default function App() {
  return (
    <App_>
      <Global />
      <MenuBar $h={43} $bg="#171717" $line="#333">
        <Cell $w={168} $line="#2c2c2c" $green>
          <Burst />
          Home Screen
        </Cell>
        <Cell $w={139} $line="#2c2c2c">
          <Mail />
          Messages
        </Cell>
        <Cell $w={125} $line="#2c2c2c">
          <Headset />
          Support
        </Cell>
        <Cell $w={157} $line="#2c2c2c">
          <Chat />
          Chat Rooms
        </Cell>
        <Cell $w={107} $line="#2c2c2c" $start>
          <Gear />
          Setup
        </Cell>
      </MenuBar>
      <Bar $h={31} $bg={c.ink}>
        <Cell $w={55} $line={c.ink} aria-label="Gadget settings">
          <Gear />
        </Cell>
      </Bar>
      <Bar $h={32} $bg={c.bar}>
        <Cell $w={160} $line="#454545" $start>
          <Demand />
          OnDemand
        </Cell>
      </Bar>
      <Bar $h={33} $bg={c.grey} $line="#505050">
        <Cell $w={112} $line="#606060">UTB_Nov_15</Cell>
        <Cell $w={54} $line="#606060" aria-label="Undo">
          <Undo />
        </Cell>
        <Cell $w={54} $line={c.grey} aria-label="Back">
          <Left />
        </Cell>
        <Cell $w={54} $line={c.grey} aria-label="Forward">
          <Right />
        </Cell>
        <Cell $w={88} $line={c.grey} $start aria-label="Symbol link color">
          <Swatches />
          <Corner />
        </Cell>
        <Cell $w={54} $line="#606060" aria-label="Grid menu">
          <List />
          <Corner />
        </Cell>
      </Bar>
      <ChartBar $h={37} $bg={c.navy} $line="#0a4466">
        <Cell $w={107} $line="#14496a">
          <Share />
          Share
        </Cell>
        <Cell $w={56} $line="#14496a" aria-label="Chart info">
          <Card />
        </Cell>
        <Cell $w={55} $line="#14496a" aria-label="Edit studies">
          <Flask />
        </Cell>
        <Cell $w={56} $line="#14496a" aria-label="Chart settings">
          <Gear />
        </Cell>
        <Cell $w={65} $line="#14496a">
          <Bold>5m</Bold>
          <Corner />
        </Cell>
        <Cell $w={100} $line="#14496a" $start>
          <Candles />
          Style
          <Corner />
        </Cell>
        <Cell $w={135} $line="#14496a" $start>
          <Hand />
          Drawings
          <Corner />
        </Cell>
        <Cell $w={118} $line="#14496a" $start>
          <Flask />
          Studies
          <Corner />
        </Cell>
        <Cell $w={132} $line="#14496a" $start>
          <Pattern />
          Patterns
          <Corner />
        </Cell>
        <Cell $w={55} $line="#14496a" aria-label="Chart menu">
          <List />
          <Corner />
        </Cell>
      </ChartBar>
      <Body>
        <LeftEdge />
        <Workspace>
          <Pane $grow>
            <Frame>
              <LabelRow $end>
                {strategyLabels.map(([text, color], i) => (
                  <Label key={i} $color={color}>
                    {text}
                  </Label>
                ))}
                <LabelEnd />
              </LabelRow>
              <PricePlot />
            </Frame>
            <Axis $pad={15}>
              <AxisIcon width="26" height="26" viewBox="0 0 26 26" aria-hidden="true" fill="none" stroke="#e6e6e6">
                <path d="M1 3h24M1 24h24" strokeWidth="2.600" />
                <path d="M2 18c3 2 6 1.500 8-1.500l5-7c2-3 5-3.500 8-1.500" strokeWidth="1.500" />
              </AxisIcon>
              {priceTicks.map((t, i) => (
                <Tick key={i} $h={46}>
                  {t || ""}
                </Tick>
              ))}
              {priceTags.map((t) => (
                <Tag
                  key={t.value}
                  $bg={t.bg}
                  $fg={t.fg}
                  $edge={t.edge}
                  style={{ top: Math.round(26 + (16140 - t.value) * 2.3) }}
                >
                  {t.value}
                </Tag>
              ))}
            </Axis>
          </Pane>
          <Divider />
          <Pane>
            <Frame>
              <LabelRow>
                {macdLabels.map(([text, color], i) => (
                  <Label key={i} $color={color}>
                    {text}
                  </Label>
                ))}
              </LabelRow>
              <MacdPlot />
            </Frame>
            <Axis $pad={19}>
              {["30", "20", "10", "", "-10"].map((t, i) => (
                <Tick key={i} $h={39}>
                  {t}
                </Tick>
              ))}
              <Tag $bg="#00ffff" $fg="#0a0a0a" $edge="#00ffff" style={{ top: Math.round(38 + 30.5265 * 3.52) }}>
                -0.5265
              </Tag>
            </Axis>
          </Pane>
          <Times>
            {times.map((t) => (
              <span key={t}>{t}</span>
            ))}
          </Times>
          <Bottom>
            <Lead>
              <Arrow $dir="l" aria-label="Scroll left" />
            </Lead>
            <UpButton aria-label="Expand">
              <svg width="12" height="19" viewBox="0 0 12 19" aria-hidden="true">
                <path d="M0 8h12v3H0zM6 13l5 6H1z" fill={W} />
              </svg>
            </UpButton>
            <HScroll>
              <HThumb>
                <Grip vertical />
              </HThumb>
              <Arrow $dir="l" aria-label="Scroll back" />
              <Arrow $dir="r" aria-label="Scroll forward" />
            </HScroll>
            <Tools>
              <Tool aria-label="Fit width">
                <svg width="24" height="20" viewBox="0 0 24 20" aria-hidden="true">
                  <path d="M7 3v14L1 10zM17 3v14l6-7zM9 5h1.500v10H9zM13.500 5H15v10h-1.500z" fill={W} />
                </svg>
              </Tool>
              <Tool aria-label="Crosshair">
                <svg width="24" height="20" viewBox="0 0 24 20" aria-hidden="true" fill="none" stroke={W} strokeWidth="1.600">
                  <circle cx="12" cy="11" r="7.500" />
                  <path d="M12 1v20M2.500 11h19" />
                </svg>
              </Tool>
              <Tool aria-label="Zoom in">
                <svg width="24" height="20" viewBox="0 0 24 20" aria-hidden="true" fill="none" stroke={W} strokeWidth="1.800">
                  <circle cx="10" cy="9" r="8" />
                  <path d="M10 5.500v7M6.500 9h7" />
                  <path d="M16 15l7 7" strokeWidth="3" />
                </svg>
              </Tool>
              <Tool aria-label="Zoom out">
                <svg width="24" height="20" viewBox="0 0 24 20" aria-hidden="true" fill="none" stroke={W} strokeWidth="1.800">
                  <circle cx="10" cy="9" r="8" />
                  <path d="M6.500 9h7" />
                  <path d="M16 15l7 7" strokeWidth="3" />
                </svg>
              </Tool>
              <Tool aria-label="Pan">
                <Hand />
              </Tool>
            </Tools>
            <DrawingSet>
              Drawing set: Default
              <Corner />
            </DrawingSet>
          </Bottom>
        </Workspace>
        <Side>
          {sideTabs.map(([name, h]) => (
            <SideTab key={name} $h={h} $on={name === "Chart"}>
              <span>{name}</span>
            </SideTab>
          ))}
          <SideEnd />
        </Side>
        <RightEdge />
      </Body>
      <MacdDialog />
    </App_>
  );
}
